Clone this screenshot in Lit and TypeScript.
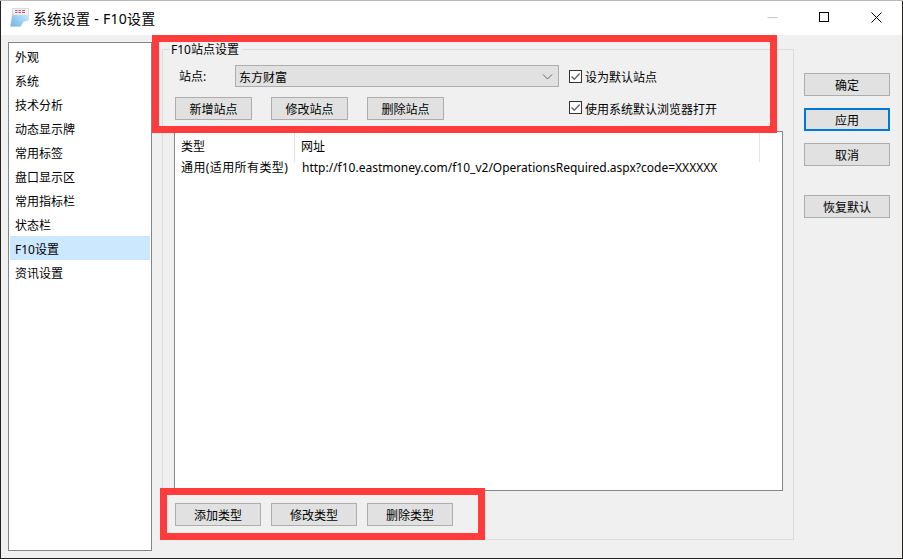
import { LitElement, html, css, svg } from "lit";
import { customElement } from "lit/decorators.js";

const navItems = ["外观", "系统", "技术分析", "动态显示牌", "常用标签", "盘口显示区", "常用指标栏", "状态栏", "F10设置", "资讯设置"];

@customElement("app-root")
export class AppRoot extends LitElement {
  static styles = css`
    :host {
      display: block;
      position: relative;
      width: 903px;
      height: 559px;
      box-sizing: border-box;
      padding: 1px 1px 1px 1px;
      background: linear-gradient(#b9b9b9 0 1px, #24211f 1px);
      font-family: "Noto Sans", "Noto Sans CJK SC", sans-serif;
      font-size: 12px;
      color: #000;
      overflow: hidden;
    }
    .window { display: flex; flex-direction: column; height: 557px; background: #f0f0f0; }
    .title { height: 34px; flex: none; background: #fff; display: flex; align-items: center; padding-left: 9px; box-sizing: border-box; }
    .title .logo { width: 19px; height: 19px; margin: -2px 4px 0 0; flex: none; }
    .title .name { font-size: 14px; flex: 1; letter-spacing: 0.3px; }
    .ctl { width: 52px; height: 34px; display: flex; align-items: center; justify-content: center; flex: none; }
    .ctl svg { display: block; margin-bottom: 1px; }
    .body { display: flex; flex: 1; padding: 7px 0 0 7px; min-height: 0; }
    .list { width: 144px; height: 509px; box-sizing: border-box; border: 1px solid #82878c; background: #fff; padding: 1px; flex: none; margin-right: 10px; }
    .item { height: 24px; line-height: 28px; padding-left: 5px; }
    .item.sel { background: #cce8ff; }
    .group { width: 632px; height: 491px; margin-top: 7px; box-sizing: border-box; border: 1px solid #dcdcdc; padding: 0 0 0 12px; flex: none; }
    .legend { display: block; width: max-content; height: 14px; line-height: 14px; margin: -7px 0 0 -5px; padding: 0 3px 0 1px; background: #f0f0f0; }
    .site { display: grid; grid-template-columns: 384px 1fr; grid-template-rows: 22px 23px; column-gap: 10px; row-gap: 10px; margin-top: 8px; }
    .site-row { display: flex; align-items: center; }
    .label { width: 60px; box-sizing: border-box; padding-left: 4px; flex: none; }
    .select { flex: 1; height: 22px; box-sizing: border-box; background: #e1e1e1; border: 1px solid #adadad; display: flex; align-items: center; justify-content: space-between; padding: 1px 5px 0 3px; }
    .btns { display: flex; gap: 19px; }
    .btnrow2 { display: flex; gap: 10px; margin-top: 12px; }
    button { font: inherit; color: #000; height: 23px; box-sizing: border-box; background: #e1e1e1; border: 1px solid #adadad; padding: 0; margin: 0; flex: none; }
    .btns button { width: 77px; }
    .btnrow2 button { width: 86px; }
    .check { display: flex; align-items: center; gap: 3px; height: 23px; }
    .check.low .box { margin-top: -2px; }
    .box { width: 13px; height: 13px; box-sizing: border-box; border: 1px solid #333; background: #fff; display: block; flex: none; }
    .table { width: 609px; height: 360px; margin: 11px 0 0 -1px; box-sizing: border-box; border: 1px solid #82878c; background: #fff; }
    .thead { display: grid; grid-template-columns: 120px 465px 1fr; height: 25px; }
    .thead div { border-right: 1px solid #e5e5e5; padding-left: 6px; line-height: 30px; }
    .thead div:last-child { border-right: none; }
    .trow { display: grid; grid-template-columns: 120px 1fr; height: 20px; line-height: 22px; }
    .trow div:first-child { padding-left: 6px; white-space: nowrap; letter-spacing: 0.4px; }
    .trow div:last-child { padding-left: 7px; white-space: nowrap; }
    .side { display: flex; flex-direction: column; margin: 31px 0 0 10px; width: 86px; flex: none; }
    .side button { width: 86px; }
    .side .b2 { margin-top: 12px; border: 2px solid #0078d7; }
    .side .b3 { margin-top: 12px; }
    .side .b4 { margin-top: 29px; }
    .mark { position: absolute; box-sizing: border-box; border: 7px solid #ff3b3b; pointer-events: none; }
    .mark.a { left: 152px; top: 35px; width: 625px; height: 98px; }
    .mark.b { left: 160px; top: 488px; width: 325px; height: 52px; }
  `;

  private check() {
    return html`<svg class="box" viewBox="0 0 11 11">${svg`<path d="M1.5 5.5 L4.3 8.3 L9.7 2.5" fill="none" stroke="#666" stroke-width="1.4"/>`}</svg>`;
  }

  render() {
    return html`
      <div class="window">
        <div class="title">
          <svg class="logo" viewBox="0 0 19 19">
            <defs>
              <linearGradient id="pg" x1="0" y1="1" x2="1" y2="0">
                <stop offset="0" stop-color="#6fb3e4"/>
                <stop offset="0.55" stop-color="#a8d8f3"/>
                <stop offset="1" stop-color="#dff2fb"/>
              </linearGradient>
            </defs>
            <path d="M3 0.5 H18.5 V12 L13.5 13.5 L10.5 18.5 H0.5 Z" fill="url(#pg)" stroke="#a9cfe8" stroke-width="0.5"/>
            <rect x="3" y="0.5" width="15.5" height="6.5" fill="#f4f4f6" stroke="#c9cfe0" stroke-width="0.5"/>
            <path d="M5 2.5 h2.5 M5 4.5 h2.5 M8.5 2.5 h2.5 M8.5 4.5 h2.5 M12 2.5 h3 M12 4.5 h3" stroke="#d84a58" stroke-width="1.1"/>
          </svg>
          <span class="name">系统设置 - F10设置</span>
          <div class="ctl"><svg width="11" height="11" viewBox="0 0 11 11"><path d="M0.5 5.5 H10.5" stroke="#c8c8c8"/></svg></div>
          <div class="ctl"><svg width="11" height="11" viewBox="0 0 11 11"><rect x="0.5" y="0.5" width="9" height="9" fill="none" stroke="#000"/></svg></div>
          <div class="ctl"><svg width="11" height="11" viewBox="0 0 11 11"><path d="M0.5 0.5 L10.5 10.5 M10.5 0.5 L0.5 10.5" stroke="#000" fill="none"/></svg></div>
        </div>
        <div class="body">
          <div class="list">
            ${navItems.map((t) => html`<div class="item ${t === "F10设置" ? "sel" : ""}">${t}</div>`)}
          </div>
          <div class="group">
            <span class="legend">F10站点设置</span>
            <div class="site">
              <div class="site-row">
                <span class="label">站点:</span>
                <div class="select">
                  <span>东方财富</span>
                  <svg width="11" height="6" viewBox="0 0 11 6"><path d="M1 0.5 L5.5 5 L10 0.5" fill="none" stroke="#666"/></svg>
                </div>
              </div>
              <label class="check">${this.check()}<span>设为默认站点</span></label>
              <div class="btns">
                <button>新增站点</button><button>修改站点</button><button>删除站点</button>
              </div>
              <label class="check low">${this.check()}<span>使用系统默认浏览器打开</span></label>
            </div>
            <div class="table">
              <div class="thead"><div>类型</div><div>网址</div><div></div></div>
              <div class="trow"><div>通用(适用所有类型)</div><div>http://f10.eastmoney.com/f10_v2/OperationsRequired.aspx?code=XXXXXX</div></div>
            </div>
            <div class="btnrow2">
              <button>添加类型</button><button>修改类型</button><button>删除类型</button>
            </div>
          </div>
          <div class="side">
            <button>确定</button>
            <button class="b2">应用</button>
            <button class="b3">取消</button>
            <button class="b4">恢复默认</button>
          </div>
        </div>
      </div>
      <div class="mark a"></div>
      <div class="mark b"></div>
    `;
  }
}
